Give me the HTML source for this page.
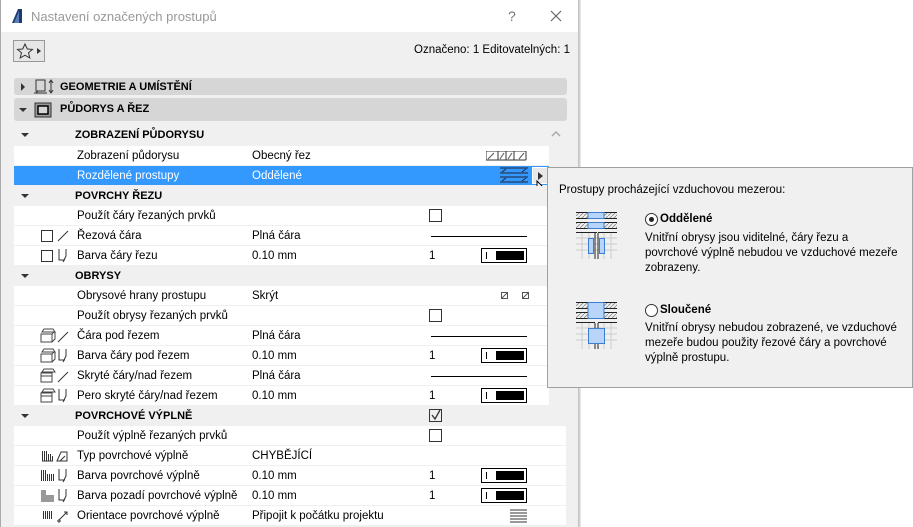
<!DOCTYPE html>
<html><head><meta charset="utf-8"><style>
*{margin:0;padding:0;box-sizing:border-box}
body{width:913px;height:527px;background:#fff;font-family:"Liberation Sans",sans-serif;font-size:11.5px;color:#000;position:relative;overflow:hidden}
.dlg{position:absolute;left:0;top:0;width:578px;height:527px;background:#f0f0f0;border-left:1px solid #aaa}
.shadow{position:absolute;left:578px;top:0;width:3px;height:527px;background:linear-gradient(90deg,#bbb,#eee)}
.title{position:absolute;left:0;top:0;width:577px;height:32px;background:#fff}
.abs{position:absolute;white-space:nowrap}
.bar{position:absolute;left:13px;width:553px;background:#d6d6d6;border-radius:3px;font-weight:bold;font-size:11px}
.row{position:absolute;left:13px;width:535px;height:19px;background:#fff}
.hdr{background:#f0f0f0;font-weight:bold;font-size:11px}
.row span{position:absolute;top:4px;white-space:nowrap}
.tri{position:absolute;left:7px;top:8px;width:0;height:0;border-left:4px solid transparent;border-right:4px solid transparent;border-top:4px solid #333}
.cb{position:absolute;width:13px;height:13px;border:1px solid #333;background:#fff}
.line{position:absolute;height:1px;background:#000}
.pen{position:absolute;width:46px;height:15px;border:1px solid #000;background:#fff}
.pen:before{content:"";position:absolute;left:4px;top:3px;width:1px;height:7px;background:#000}
.pen:after{content:"";position:absolute;left:14px;top:2px;width:28px;height:9px;background:#000}
.pop{position:absolute;left:547px;top:167px;width:366px;height:221px;background:#f0f0f0;border:1px solid #a0a0a0}
.pop .t{position:absolute;font-size:11.5px;line-height:15px;white-space:nowrap}
.radio{position:absolute;width:13px;height:13px;border:1px solid #333;border-radius:50%;background:#fff}
</style></head><body>
<div class="dlg">
<div class="title"></div>
<svg class="abs" style="left:9px;top:8px" width="14" height="16"><path d="M2 15 L8 1 L12 1 L12 15 Z" fill="#1f3b6e"/><path d="M4 15 L9 3 L9 15Z" fill="#5a7fb8"/></svg>
<div class="abs" style="left:30px;top:9px;font-size:13px;color:#999">Nastavení označených prostupů</div>
<div class="abs" style="left:507px;top:8px;font-size:14px;color:#777">?</div>
<svg class="abs" style="left:549px;top:10px" width="12" height="12"><path d="M1 1L11 11M11 1L1 11" stroke="#666" stroke-width="1.2"/></svg>
<div class="abs" style="left:12px;top:40px;width:32px;height:22px;border:1px solid #999;background:#e6e6e6"></div>
<svg class="abs" style="left:15px;top:42px" width="28" height="18"><path d="M9 2 L11.3 7 L16.5 7.4 L12.5 10.8 L13.8 16 L9 13.2 L4.2 16 L5.5 10.8 L1.5 7.4 L6.7 7 Z" fill="none" stroke="#333"/><path d="M21 6 L25 9 L21 12Z" fill="#333"/></svg>
<div class="abs" style="right:8px;top:44px;font-size:11.5px">Označeno: 1 Editovatelných: 1</div>
<div class="bar" style="top:78px;height:17px"><div class="abs" style="left:7px;top:5px;border-top:4px solid transparent;border-bottom:4px solid transparent;border-left:4px solid #333"></div>
<svg class="abs" style="left:20px;top:1px" width="22" height="16"><rect x="2" y="1" width="9" height="11" fill="none" stroke="#333"/><path d="M0 14 H13 M4 12 L2 14" stroke="#333"/><path d="M17 2 V13 M15 4 L17 1 L19 4 M15 11 L17 14 L19 11" stroke="#333" fill="none"/></svg>
<span class="abs" style="left:46px;top:3px">GEOMETRIE A UMÍSTĚNÍ</span></div>
<div class="bar" style="top:98px;height:23px"><div class="abs" style="left:5px;top:10px;border-left:4px solid transparent;border-right:4px solid transparent;border-top:4px solid #333"></div>
<svg class="abs" style="left:20px;top:4px" width="18" height="16"><rect x="1" y="1" width="16" height="14" fill="#999" stroke="#333"/><rect x="4" y="4" width="10" height="8" fill="#d6d6d6" stroke="#000" stroke-width="1.5"/></svg>
<span class="abs" style="left:46px;top:5px">PŮDORYS A ŘEZ</span></div>

<div class="row hdr" style="top:125px"><div class="tri"></div><span style="left:61px">ZOBRAZENÍ PŮDORYSU</span></div>
<div class="row" style="top:146px"><span style="left:63px">Zobrazení půdorysu</span><span style="left:238px">Obecný řez</span>
<svg class="abs" style="left:472px;top:5px" width="42" height="10"><path d="M0 0H40M0 9H40M0 0V9M12 0V9M20 0V9M28 0V9M40 0V9" stroke="#333"/><path d="M2 8L8 2M14 8L18 2M22 8L26 2M33 8L38 2" stroke="#555"/></svg></div>
<div class="row" style="top:166px;background:#3399ff;color:#fff"><span style="left:63px">Rozdělené prostupy</span><span style="left:238px">Oddělené</span>
<svg class="abs" style="left:486px;top:1px" width="30" height="17"><path d="M0 1H28M0 6H28M0 10H28M0 15H28" stroke="#223"/><path d="M2 5L6 2M22 5L26 2M2 14L6 11M22 14L26 11" stroke="#223"/></svg>
<div class="abs" style="left:518px;top:1px;width:16px;height:17px;border:1px solid #fff;background:#e8e8e8"><div class="abs" style="left:5px;top:4px;border-top:4px solid transparent;border-bottom:4px solid transparent;border-left:5px solid #333"></div></div></div>
<svg class="abs" style="left:535px;top:180px" width="14" height="20"><path d="M1 1 L1 15 L4 12 L7 18 L9 17 L6 11 L11 11 Z" fill="#fff" stroke="#000"/></svg>
<div class="row hdr" style="top:186px"><div class="tri"></div><span style="left:61px">POVRCHY ŘEZU</span></div>
<div class="row" style="top:206px"><span style="left:63px">Použít čáry řezaných prvků</span><div class="cb" style="left:415px;top:3px"></div></div>
<div class="row" style="top:226px"><div class="cb" style="left:27px;top:4px;width:12px;height:12px"></div><svg class="abs" style="left:43px;top:4px" width="12" height="12"><path d="M1 11L11 1" stroke="#333"/></svg><span style="left:63px">Řezová čára</span><span style="left:238px">Plná čára</span><div class="line" style="left:417px;top:10px;width:96px"></div></div>
<div class="row" style="top:246px"><div class="cb" style="left:27px;top:4px;width:12px;height:12px"></div><svg class="abs" style="left:43px;top:2px" width="12" height="16"><path d="M2 1V12H8M9 1V8L6 14" stroke="#333" fill="none"/></svg><span style="left:63px">Barva čáry řezu</span><span style="left:238px">0.10 mm</span><span style="left:415px">1</span><div class="pen" style="left:467px;top:2px"></div></div>
<div class="row hdr" style="top:266px"><div class="tri"></div><span style="left:61px">OBRYSY</span></div>
<div class="row" style="top:286px"><span style="left:63px">Obrysové hrany prostupu</span><span style="left:238px">Skrýt</span><svg class="abs" style="left:487px;top:6px" width="30" height="8"><rect x="0.5" y="0.5" width="6" height="6" fill="none" stroke="#555"/><path d="M1 6L6 1" stroke="#555"/><rect x="21.5" y="0.5" width="6" height="6" fill="none" stroke="#555"/><path d="M22 6L27 1" stroke="#555"/></svg></div>
<div class="row" style="top:306px"><span style="left:63px">Použít obrysy řezaných prvků</span><div class="cb" style="left:415px;top:3px"></div></div>
<div class="row" style="top:326px"><svg class="abs" style="left:26px;top:2px" width="30" height="16"><path d="M4 1H13L15 4H2Z M1 6H12V14H1Z M12 6L15 3M12 14L15 11V4" stroke="#444" fill="none"/><path d="M18 14L28 4" stroke="#333"/></svg><span style="left:63px">Čára pod řezem</span><span style="left:238px">Plná čára</span><div class="line" style="left:417px;top:10px;width:96px"></div></div>
<div class="row" style="top:346px"><svg class="abs" style="left:26px;top:2px" width="30" height="16"><path d="M4 1H13L15 4H2Z M1 6H12V14H1Z M12 6L15 3M12 14L15 11V4" stroke="#444" fill="none"/><path d="M19 1V12H25M26 1V8L23 14" stroke="#333" fill="none"/></svg><span style="left:63px">Barva čáry pod řezem</span><span style="left:238px">0.10 mm</span><span style="left:415px">1</span><div class="pen" style="left:467px;top:2px"></div></div>
<div class="row" style="top:366px"><svg class="abs" style="left:26px;top:2px" width="30" height="16"><path d="M4 1H13L15 4H2Z M1 5H12V14H1Z M1 8H12" stroke="#444" fill="none"/><path d="M18 14L28 4" stroke="#333"/></svg><span style="left:63px">Skryté čáry/nad řezem</span><span style="left:238px">Plná čára</span><div class="line" style="left:417px;top:10px;width:96px"></div></div>
<div class="row" style="top:386px"><svg class="abs" style="left:26px;top:2px" width="30" height="16"><path d="M4 1H13L15 4H2Z M1 5H12V14H1Z M1 8H12" stroke="#444" fill="none"/><path d="M19 1V12H25M26 1V8L23 14" stroke="#333" fill="none"/></svg><span style="left:63px">Pero skryté čáry/nad řezem</span><span style="left:238px">0.10 mm</span><span style="left:415px">1</span><div class="pen" style="left:467px;top:2px"></div></div>
<div class="row hdr" style="top:406px;width:552px"><div class="tri"></div><span style="left:61px">POVRCHOVÉ VÝPLNĚ</span><div class="cb" style="left:415px;top:3px;background:#f0f0f0"></div><svg class="abs" style="left:416px;top:3px" width="12" height="12"><path d="M2 6L5 10L10 1" stroke="#333" fill="none" stroke-width="1.3"/></svg></div>
<div class="row" style="top:426px;width:552px"><span style="left:63px">Použít výplně řezaných prvků</span><div class="cb" style="left:415px;top:3px"></div></div>
<div class="row" style="top:446px;width:552px"><svg class="abs" style="left:27px;top:3px" width="28" height="13"><path d="M1.5 2V12M3.5 2V12M5.5 2V12M7.5 5V12M9.5 5V12M11.5 7V12M1 12H12" stroke="#333" fill="none"/><path d="M16 12L20 3H26V12ZM19 12L24 7" stroke="#333" fill="none"/></svg><span style="left:63px">Typ povrchové výplně</span><span style="left:238px">CHYBĚJÍCÍ</span></div>
<div class="row" style="top:466px;width:552px"><svg class="abs" style="left:26px;top:2px" width="30" height="16"><path d="M1.5 2V13M3.5 2V13M5.5 2V13M7.5 6V13M9.5 6V13M11.5 6V13M13.5 6V13" stroke="#333"/><path d="M19 1V12H25M26 1V8L23 14" stroke="#333" fill="none"/></svg><span style="left:63px">Barva povrchové výplně</span><span style="left:238px">0.10 mm</span><span style="left:415px">1</span><div class="pen" style="left:467px;top:2px"></div></div>
<div class="row" style="top:486px;width:552px"><svg class="abs" style="left:26px;top:2px" width="30" height="16"><path d="M1 2H6V7H14V14H1Z" fill="#999"/><path d="M19 1V12H25M26 1V8L23 14" stroke="#333" fill="none"/></svg><span style="left:63px">Barva pozadí povrchové výplně</span><span style="left:238px">0.10 mm</span><span style="left:415px">1</span><div class="pen" style="left:467px;top:2px"></div></div>
<div class="row" style="top:506px;width:552px"><svg class="abs" style="left:28px;top:3px" width="28" height="14"><path d="M1.5 2V10M3.5 2V10M5.5 2V10M7.5 2V10M9.5 2V10" stroke="#333"/><path d="M17 11L25 3M22 3H25V6M15 12H19M17 10V14" stroke="#333" fill="none"/></svg><span style="left:63px">Orientace povrchové výplně</span><span style="left:238px">Připojit k počátku projektu</span><svg class="abs" style="left:496px;top:3px" width="18" height="14"><path d="M0 1H17M0 4H17M0 7H17M0 10H17M0 13H17" stroke="#333"/></svg></div>
<svg class="abs" style="left:550px;top:130px" width="10" height="7"><path d="M1 6L5 2L9 6" stroke="#aaa" stroke-width="1.5" fill="none"/></svg>
</div>
<div class="shadow"></div>

<div class="pop">
<div class="t" style="left:11px;top:15px">Prostupy procházející vzduchovou mezerou:</div>
<svg class="abs" style="left:28px;top:44px" width="42" height="48"><defs><pattern id="h" width="4" height="4" patternUnits="userSpaceOnUse"><path d="M0 4L4 0" stroke="#888" stroke-width="0.8"/></pattern></defs>
<rect x="0" y="1" width="41" height="5" fill="url(#h)"/><rect x="0" y="11" width="41" height="5" fill="url(#h)"/>
<path d="M0 0.5H41M0 6.5H41M0 10.5H41M0 16.5H41M0 20.5H21M22 20.5H41" stroke="#222"/>
<rect x="12" y="0.5" width="16" height="6" fill="#b8d4f8" stroke="#3a7fd5"/><rect x="12" y="10.5" width="16" height="6" fill="#b8d4f8" stroke="#3a7fd5"/>
<path d="M0 26H41M0 32H41M0 38H41M6 21V47M13 21V47M28 21V47M35 21V47" stroke="#ccc"/>
<path d="M19 21V47M22 21V47" stroke="#222"/>
<rect x="12.5" y="26.5" width="5" height="15" fill="#b8d4f8" stroke="#3a7fd5"/><rect x="23.5" y="26.5" width="5" height="15" fill="#b8d4f8" stroke="#3a7fd5"/></svg>
<div class="radio" style="left:97px;top:45px"><div class="abs" style="left:3px;top:3px;width:5px;height:5px;border-radius:50%;background:#222"></div></div>
<div class="t" style="left:112px;top:44px;font-weight:bold">Oddělené</div>
<div class="t" style="left:97px;top:63px">Vnitřní obrysy jsou viditelné, čáry řezu a<br>povrchové výplně nebudou ve vzduchové mezeře<br>zobrazeny.</div>
<svg class="abs" style="left:28px;top:134px" width="42" height="48">
<rect x="0" y="1" width="41" height="5" fill="url(#h)"/><rect x="0" y="11" width="41" height="5" fill="url(#h)"/>
<path d="M0 0.5H41M0 6.5H41M0 10.5H41M0 16.5H41M0 20.5H19M22 20.5H41" stroke="#222"/>
<rect x="12" y="0.5" width="16" height="16" fill="#b8d4f8" stroke="#3a7fd5"/>
<path d="M0 26H41M0 32H41M0 38H41M6 21V47M13 21V47M28 21V47M35 21V47" stroke="#ccc"/>
<path d="M19 21V47M22 21V47" stroke="#222"/>
<rect x="12.5" y="26.5" width="16" height="15" fill="#b8d4f8" stroke="#3a7fd5"/></svg>
<div class="radio" style="left:97px;top:136px"></div>
<div class="t" style="left:112px;top:135px;font-weight:bold">Sloučené</div>
<div class="t" style="left:97px;top:153px">Vnitřní obrysy nebudou zobrazené, ve vzduchové<br>mezeře budou použity řezové čáry a povrchové<br>výplně prostupu.</div>
</div>
</body></html>
